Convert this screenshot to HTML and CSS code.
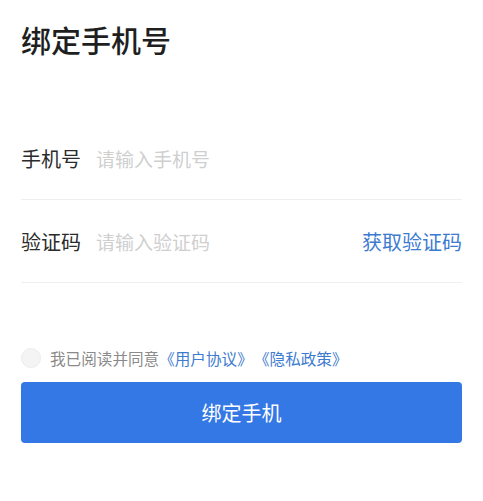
FILE: index.html
```html
<!DOCTYPE html>
<html lang="zh">
<head>
<meta charset="utf-8">
<link rel="stylesheet" href="styles.css">
</head>
<body>
<div class="page">
  <h1 class="title">绑定手机号</h1>
  <div class="form">
    <div class="row">
      <span class="label">手机号</span>
      <span class="placeholder">请输入手机号</span>
    </div>
    <div class="row">
      <span class="label">验证码</span>
      <span class="placeholder">请输入验证码</span>
      <span class="get-code">获取验证码</span>
    </div>
  </div>
  <div class="agree">
    <span class="check"></span>
    <span class="agree-text">我已阅读并同意<span class="link">《用户协议》</span><span class="link link-gap">《隐私政策》</span></span>
  </div>
  <div class="btn">绑定手机</div>
</div>
</body>
</html>
```
FILE: styles.css
```css
html, body {
  margin: 0;
  padding: 0;
  background: #fff;
}
body {
  font-family: "Noto Sans CJK SC", "Noto Sans", sans-serif;
}
.page {
  padding: 0 21px;
}
.title {
  margin: 0;
  padding-top: 19px;
  font-size: 30px;
  line-height: 40px;
  font-weight: 500;
  color: #1f1f1f;
  height: 40px;
}
.form {
  margin-top: 58px;
}
.row {
  display: flex;
  align-items: center;
  height: 82px;
  border-bottom: 1px solid #efefef;
}
.label {
  font-size: 20px;
  color: #2b2b2b;
  width: 75px;
  flex: none;
}
.placeholder {
  font-size: 19px;
  color: #cfcfcf;
  flex: 1;
}
.get-code {
  font-size: 20px;
  color: #3d7bd0;
}
.agree {
  display: flex;
  align-items: center;
  margin-top: 65px;
  height: 20px;
}
.check {
  width: 18px;
  height: 18px;
  border-radius: 50%;
  background: #f4f4f4;
  border: 1px solid #ececec;
  flex: none;
  margin-right: 9px;
}
.agree-text {
  font-size: 15.6px;
  color: #8a8a8a;
  white-space: nowrap;
}
.link {
  color: #3d7bd0;
}
.link-gap {
  margin-left: 9px;
}
.btn {
  margin-top: 14px;
  height: 61px;
  border-radius: 4px;
  background: #3478e6;
  color: #fff;
  font-size: 20px;
  display: flex;
  align-items: center;
  justify-content: center;
}
```
